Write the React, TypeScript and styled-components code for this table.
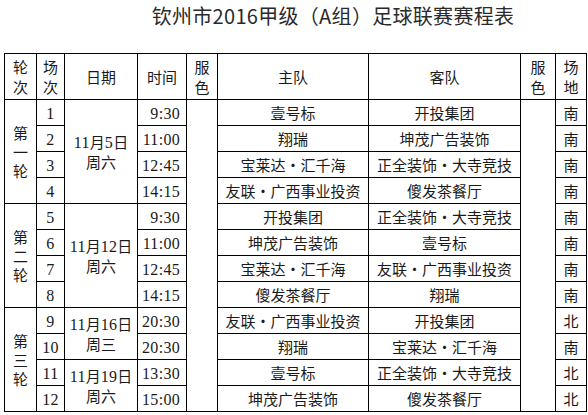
import React from 'react';
import styled, { createGlobalStyle } from 'styled-components';

const GlobalStyle = createGlobalStyle`
  html, body {
    margin: 0;
    padding: 0;
    background: #fff;
  }
  body {
    width: 588px;
    height: 415px;
    overflow: hidden;
    font-family: "Noto Sans CJK SC", "Noto Sans", sans-serif;
    color: #1a1a1a;
  }
`;

const Page = styled.div`
  width: 588px;
`;

const Title = styled.h1`
  margin: 0;
  height: 53px;
  line-height: 32px;
  padding-left: 78px;
  text-align: center;
  font-size: 20px;
  font-weight: 400;
  color: #2a2a2a;
  letter-spacing: 0.3px;
`;

const Table = styled.table`
  margin-left: 4px;
  width: 583px;
  border-collapse: collapse;
  table-layout: fixed;
  font-size: 15px;
`;

const Col = styled.col<{ $w: number }>`
  width: ${(p) => p.$w}px;
`;

const HeadRow = styled.tr`
  height: 46px;
`;

const BodyRow = styled.tr`
  height: 26px;
`;

const Th = styled.th`
  border: 1px solid #000;
  padding: 0;
  font-weight: 400;
  line-height: 20px;
  text-align: center;
  vertical-align: middle;
`;

const Td = styled.td<{ $align?: 'left' | 'center' | 'right' }>`
  border: 1px solid #000;
  padding: 0 ${(p) => (p.$align === 'right' ? '6px' : '0')} 0 0;
  line-height: 19px;
  text-align: ${(p) => p.$align || 'center'};
  vertical-align: middle;
  white-space: nowrap;
`;

const Num = styled.span`
  font-family: "Liberation Serif", serif;
  font-size: 16px;
  letter-spacing: 0.3px;
`;

const Dot = styled.span`
  display: inline-block;
  width: 15px;
  text-align: center;
`;

type Match = [number, string, string, string, string];
type Day = { date: string; week: string; span: number };
type Round = { label: string[]; days: Day[]; matches: Match[] };

const rounds: Round[] = [
  {
    label: ['第', '一', '轮'],
    days: [{ date: '11月5日', week: '周六', span: 4 }],
    matches: [
      [1, '9:30', '壹号标', '开投集团', '南'],
      [2, '11:00', '翔瑞', '坤茂广告装饰', '南'],
      [3, '12:45', '宝莱达·汇千海', '正全装饰·大寺竞技', '南'],
      [4, '14:15', '友联·广西事业投资', '傻发茶餐厅', '南'],
    ],
  },
  {
    label: ['第', '二', '轮'],
    days: [{ date: '11月12日', week: '周六', span: 4 }],
    matches: [
      [5, '9:30', '开投集团', '正全装饰·大寺竞技', '南'],
      [6, '11:00', '坤茂广告装饰', '壹号标', '南'],
      [7, '12:45', '宝莱达·汇千海', '友联·广西事业投资', '南'],
      [8, '14:15', '傻发茶餐厅', '翔瑞', '南'],
    ],
  },
  {
    label: ['第', '三', '轮'],
    days: [
      { date: '11月16日', week: '周三', span: 2 },
      { date: '11月19日', week: '周六', span: 2 },
    ],
    matches: [
      [9, '20:30', '友联·广西事业投资', '开投集团', '北'],
      [10, '20:30', '翔瑞', '宝莱达·汇千海', '南'],
      [11, '13:30', '壹号标', '正全装饰·大寺竞技', '北'],
      [12, '15:00', '坤茂广告装饰', '傻发茶餐厅', '北'],
    ],
  },
];

const totalRows = rounds.reduce((n, r) => n + r.matches.length, 0);

// digits (and time colons) in the thin latin face, the rest in the CJK face
function mixed(text: string) {
  return text.split(/([\d:]+|·)/).filter(Boolean).map((part, i) => {
    if (/^[\d:]+$/.test(part)) return <Num key={i}>{part}</Num>;
    if (part === '·') return <Dot key={i}>·</Dot>;
    return <React.Fragment key={i}>{part}</React.Fragment>;
  });
}

function Stack({ lines }: { lines: string[] }) {
  return (
    <>
      {lines.map((l, i) => (
        <React.Fragment key={i}>
          {i > 0 && <br />}
          {mixed(l)}
        </React.Fragment>
      ))}
    </>
  );
}

export default function App() {
  let rowIndex = 0;
  return (
    <Page>
      <GlobalStyle />
      <Title>钦州市2016甲级（A组）足球联赛赛程表</Title>
      <Table>
        <colgroup>
          <Col $w={32} />
          <Col $w={28} />
          <Col $w={73} />
          <Col $w={49} />
          <Col $w={31} />
          <Col $w={151} />
          <Col $w={152} />
          <Col $w={35} />
          <Col $w={31} />
        </colgroup>
        <thead>
          <HeadRow>
            <Th><Stack lines={['轮', '次']} /></Th>
            <Th><Stack lines={['场', '次']} /></Th>
            <Th>日期</Th>
            <Th>时间</Th>
            <Th><Stack lines={['服', '色']} /></Th>
            <Th>主队</Th>
            <Th>客队</Th>
            <Th><Stack lines={['服', '色']} /></Th>
            <Th><Stack lines={['场', '地']} /></Th>
          </HeadRow>
        </thead>
        <tbody>
          {rounds.map((round) => {
            let dayCursor = 0;
            const dayStarts = round.days.map((d) => {
              const s = dayCursor;
              dayCursor += d.span;
              return s;
            });
            return round.matches.map((m, i) => {
              const first = rowIndex === 0;
              rowIndex += 1;
              const dayIdx = dayStarts.indexOf(i);
              const day = dayIdx >= 0 ? round.days[dayIdx] : null;
              return (
                <BodyRow key={m[0]}>
                  {i === 0 && (
                    <Td rowSpan={round.matches.length}>
                      <Stack lines={round.label} />
                    </Td>
                  )}
                  <Td>{mixed(String(m[0]))}</Td>
                  {day && (
                    <Td rowSpan={day.span}>
                      <Stack lines={[day.date, day.week]} />
                    </Td>
                  )}
                  <Td $align="right">{mixed(m[1])}</Td>
                  {first && <Td rowSpan={totalRows} />}
                  <Td>{mixed(m[2])}</Td>
                  <Td>{mixed(m[3])}</Td>
                  {first && <Td rowSpan={totalRows} />}
                  <Td>{m[4]}</Td>
                </BodyRow>
              );
            });
          })}
        </tbody>
      </Table>
    </Page>
  );
}
